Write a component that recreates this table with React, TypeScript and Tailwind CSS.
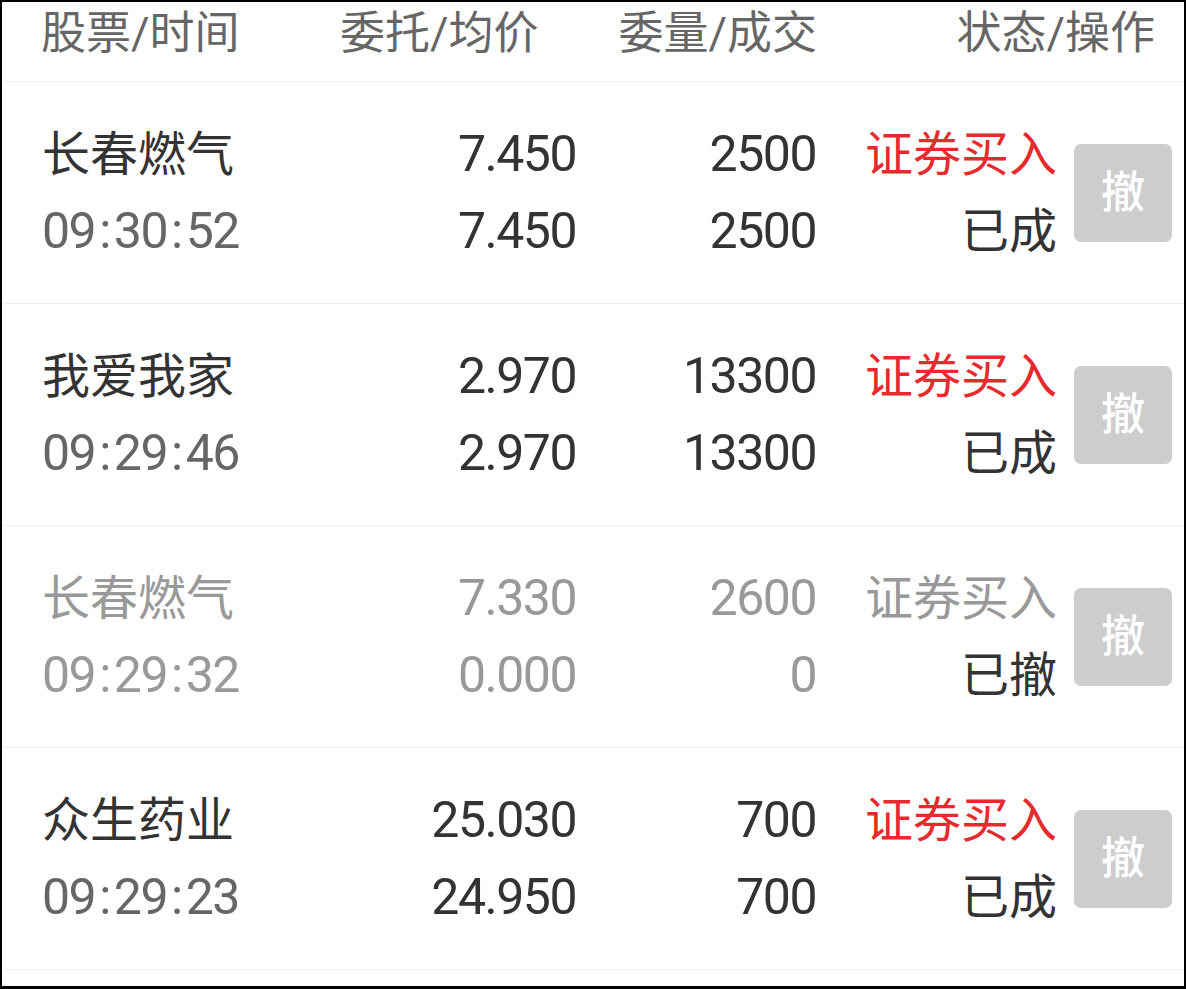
import React from "react";

type Row = {
  name: string;
  time: string;
  p1: string;
  p2: string;
  q1: string;
  q2: string;
  status: string;
  dim?: boolean;
};

const rows: Row[] = [
  { name: "长春燃气", time: "09:30:52", p1: "7.450", p2: "7.450", q1: "2500", q2: "2500", status: "已成" },
  { name: "我爱我家", time: "09:29:46", p1: "2.970", p2: "2.970", q1: "13300", q2: "13300", status: "已成" },
  { name: "长春燃气", time: "09:29:32", p1: "7.330", p2: "0.000", q1: "2600", q2: "0", status: "已撤", dim: true },
  { name: "众生药业", time: "09:29:23", p1: "25.030", p2: "24.950", q1: "700", q2: "700", status: "已成" },
];

function Time({ t }: { t: string }) {
  const parts = t.split(":");
  return (
    <span>
      {parts.map((p, i) => (
        <React.Fragment key={i}>
          {i > 0 && <span className="mx-[4px]">:</span>}
          {p}
        </React.Fragment>
      ))}
    </span>
  );
}

export default function App() {
  return (
    <div className="w-[1186px] h-[989px] bg-white border-2 border-b-[3px] border-black overflow-hidden">
      {/* header */}
      <div className="h-[80px] pt-[4px] border-b border-[#eeeeee] grid grid-cols-[338px_195px_282px_338px] content-start pr-[29px] font-['Roboto','Noto_Sans_CJK_SC',sans-serif] text-[45px] leading-[56px] text-[#666666] whitespace-nowrap">
        <div className="pl-[39px]">股票/时间</div>
        <div className="text-right">委托/均价</div>
        <div className="text-right">委量/成交</div>
        <div className="text-right">状态/操作</div>
      </div>

      {rows.map((r, idx) => {
        const main = r.dim ? "text-[#999999]" : "text-[#333333]";
        const sub = r.dim ? "text-[#999999]" : "text-[#666666]";
        const red = r.dim ? "text-[#999999]" : "text-[#e62a2d]";
        return (
          <div
            key={idx}
            className="h-[222px] border-b border-[#eeeeee] grid grid-cols-[398px_176px_240px_241px_17px_98px] pr-[12px] items-center font-['Roboto','Noto_Sans_CJK_SC',sans-serif] leading-[77px] whitespace-nowrap"
          >
            <div className="pl-[40px] flex flex-col">
              <span className={`text-[48px] ${main}`}>{r.name}</span>
              <span className={`text-[50px] tracking-[-1.5px] ${sub}`}>
                <Time t={r.time} />
              </span>
            </div>
            <div className={`flex flex-col items-end text-[50px] tracking-[-1.5px] ${main}`}>
              <span>{r.p1}</span>
              <span>{r.p2}</span>
            </div>
            <div className={`flex flex-col items-end text-[50px] tracking-[-1.5px] ${main}`}>
              <span>{r.q1}</span>
              <span>{r.q2}</span>
            </div>
            <div className="flex flex-col items-end text-[48px]">
              <span className={red}>证券买入</span>
              <span className="text-[#333333]">{r.status}</span>
            </div>
            <div />
            <div className="w-[98px] h-[98px] rounded-[7px] bg-[#cdcdcd] flex items-center justify-center text-white text-[44px] leading-none font-medium">
              撤
            </div>
          </div>
        );
      })}
    </div>
  );
}
